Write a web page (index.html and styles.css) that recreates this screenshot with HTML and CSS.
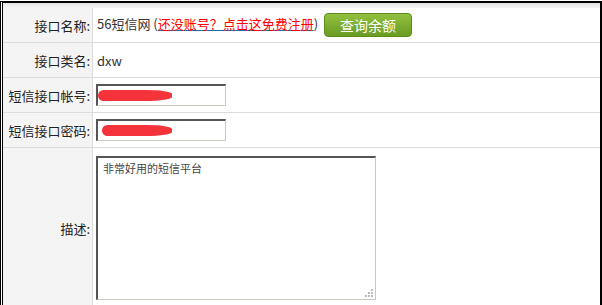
FILE: index.html
```html
<!DOCTYPE html>
<html>
<head>
  <meta charset="utf-8">
  <link rel="stylesheet" href="styles.css">
</head>
<body>
  <div class="frame">
    <div class="top-strip"></div>
    <table class="form-table">
      <tr>
        <td class="label">接口名称:</td>
        <td class="value">
          56短信网 (<a class="reg-link" href="#"><span>还没账号？点击这免费注册</span></a>)
          <button class="check-btn">查询余额</button>
        </td>
      </tr>
      <tr>
        <td class="label">接口类名:</td>
        <td class="value">dxw</td>
      </tr>
      <tr>
        <td class="label">短信接口帐号:</td>
        <td class="value">
          <span class="field">
            <input type="text" class="txt">
            <span class="scribble scribble-a"></span>
          </span>
        </td>
      </tr>
      <tr>
        <td class="label">短信接口密码:</td>
        <td class="value">
          <span class="field">
            <input type="text" class="txt">
            <span class="scribble scribble-b"></span>
          </span>
        </td>
      </tr>
      <tr>
        <td class="label">描述:</td>
        <td class="value value-area">
          <span class="area-wrap">
            <textarea class="desc">非常好用的短信平台</textarea>
            <span class="grip"></span>
          </span>
        </td>
      </tr>
    </table>
  </div>
</body>
</html>
```

FILE: styles.css
```css
body {
  margin: 0;
  background: #fff;
  font-family: "Noto Sans CJK SC", "Liberation Sans", sans-serif;
  font-size: 13px;
  color: #333;
}
.frame {
  margin-top: 1px;
  height: 304px;
  border-top: 2px solid #000;
  border-left: 3px double #000;
  border-right: 2px solid #000;
  overflow: hidden;
}
.top-strip {
  height: 5px;
  background: linear-gradient(#e2e2e2, #f4f4f4);
}
.form-table {
  width: 100%;
  border-collapse: separate;
  border-spacing: 0;
}
.form-table td {
  height: 34px;
  padding: 0;
  border-bottom: 1px solid #dcdcdc;
  vertical-align: middle;
}
.label {
  width: 87px;
  padding-right: 2px !important;
  text-align: right;
  background: #f4f4f4;
  border-right: 1px solid #dcdcdc;
  white-space: nowrap;
  color: #222;
}
.value {
  padding-left: 4px !important;
  white-space: nowrap;
}
.reg-link {
  color: #1a6ea8;
  text-decoration: underline;
}
.reg-link span {
  color: #f00;
}
.check-btn {
  margin-left: 3px;
  width: 88px;
  height: 24px;
  border: 1px solid #5d8b1c;
  border-radius: 4px;
  background: linear-gradient(#92c13f, #6a9b22);
  color: #fff;
  font-family: "Noto Sans CJK SC", sans-serif;
  font-size: 14px;
  line-height: 20px;
  vertical-align: middle;
}
.field {
  position: relative;
  display: inline-block;
  margin-left: -1px;
  vertical-align: middle;
}
.txt {
  display: block;
  box-sizing: border-box;
  width: 130px;
  height: 22px;
  margin: 0;
  border-top: 2px solid #555;
  border-left: 2px solid #555;
  border-right: 1px solid #ccc8c0;
  border-bottom: 1px solid #ccc8c0;
  background: #fff;
}
.scribble {
  position: absolute;
  height: 11px;
  background: #f5333a;
  border-radius: 6px 40% 40% 6px;
}
.scribble-a {
  left: 2px;
  top: 6px;
  width: 74px;
}
.scribble-b {
  left: 6px;
  top: 6px;
  width: 70px;
}
.value-area {
  height: auto !important;
  padding-top: 8px !important;
  padding-bottom: 8px !important;
}
.area-wrap {
  position: relative;
  display: block;
  width: 280px;
  margin-left: -1px;
}
.desc {
  display: block;
  box-sizing: border-box;
  width: 280px;
  height: 144px;
  margin: 0;
  padding: 4px 5px;
  resize: none;
  border-top: 2px solid #555;
  border-left: 2px solid #555;
  border-right: 1px solid #ccc8c0;
  border-bottom: 1px solid #ccc8c0;
  font-family: "Noto Sans CJK SC", sans-serif;
  font-size: 11px;
  line-height: 13px;
  color: #444;
}
.grip {
  position: absolute;
  right: 3px;
  bottom: 3px;
  width: 2px;
  height: 2px;
  background: #bbb;
  box-shadow: -3px 0 #bbb, -6px 0 #bbb, 0 -3px #bbb, -3px -3px #bbb, 0 -6px #bbb;
}
```
